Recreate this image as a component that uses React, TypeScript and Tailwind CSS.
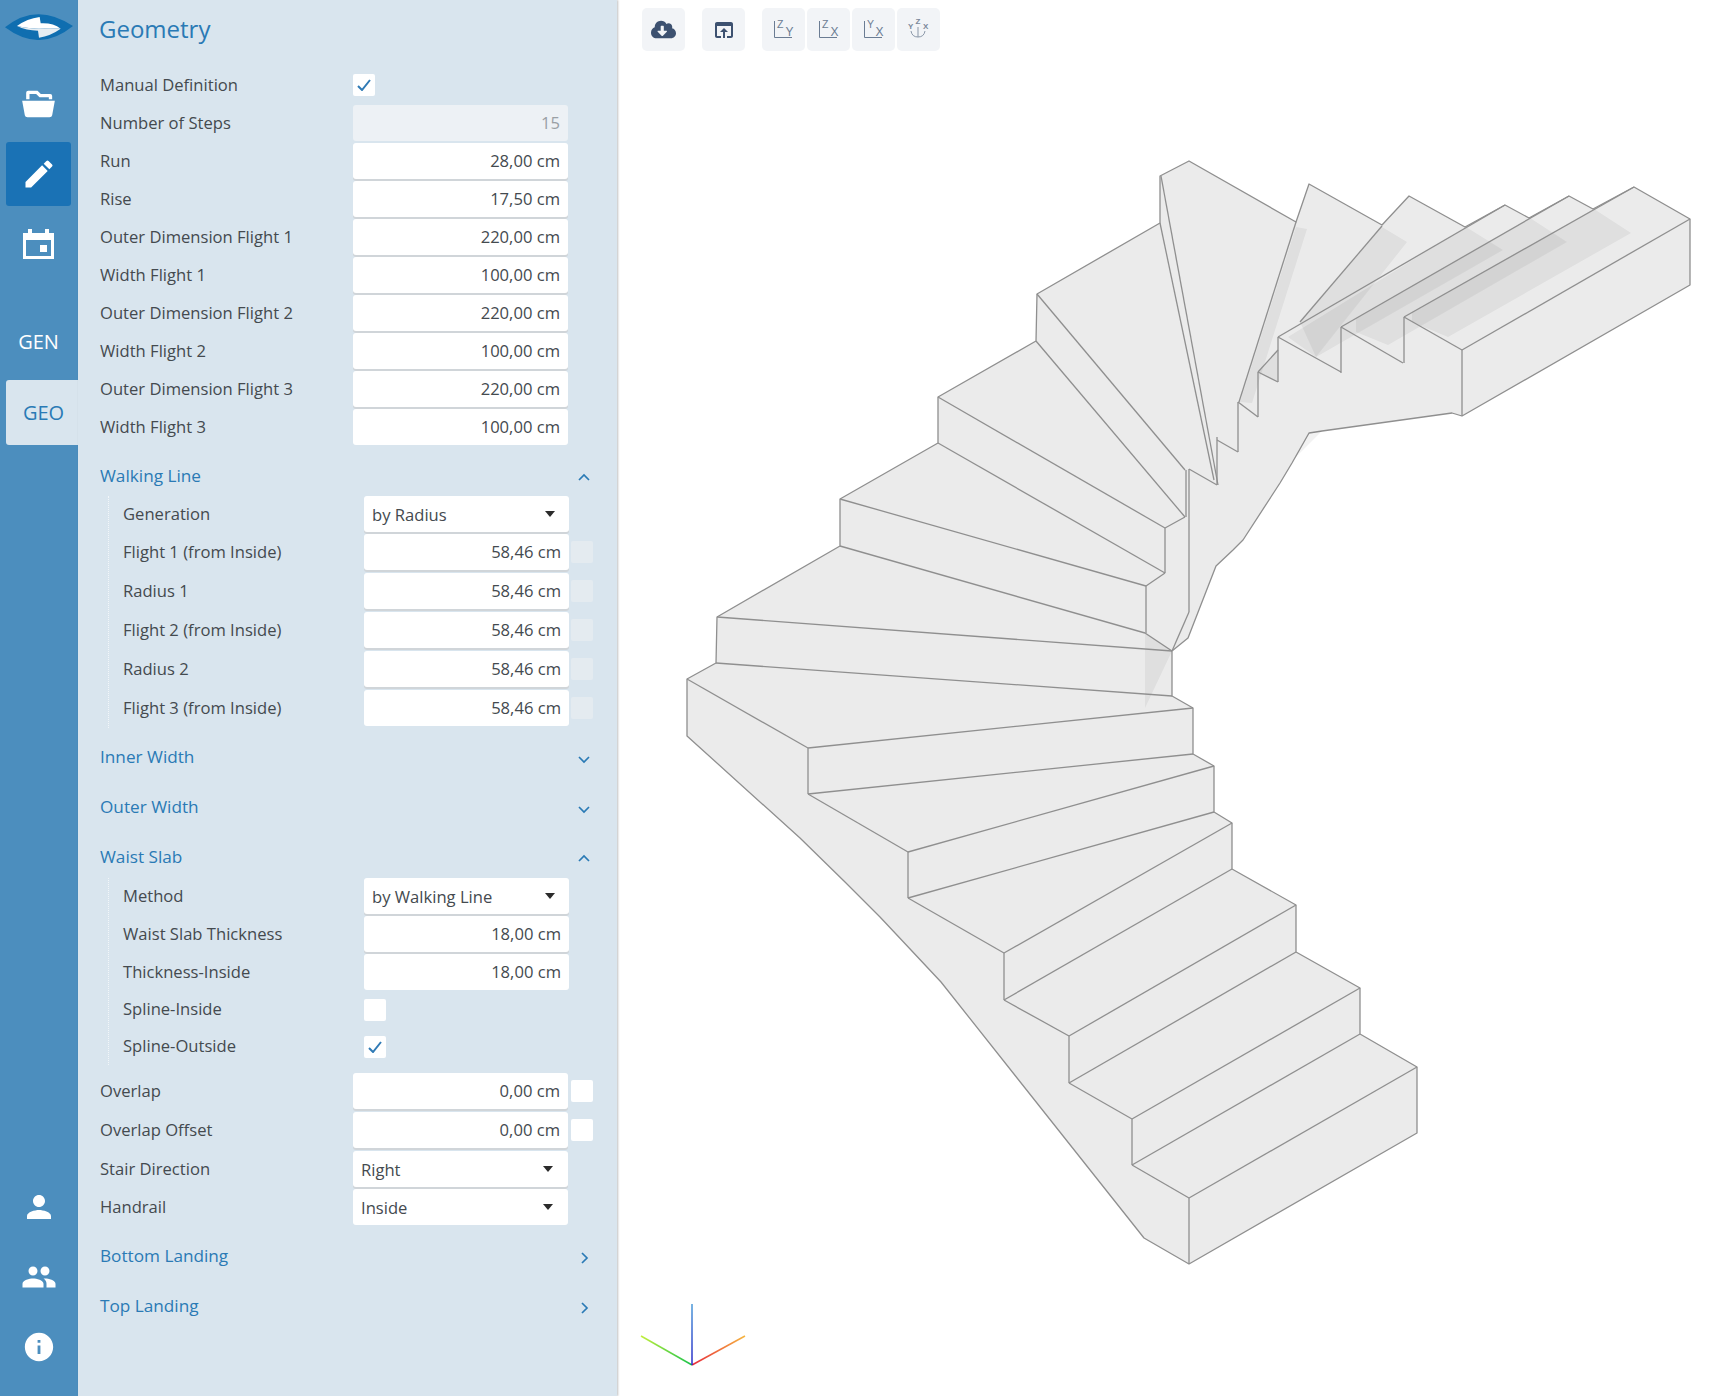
import React from "react";
import { MdEdit, MdPerson, MdPeople, MdInfo } from "react-icons/md";
import { FaCloudDownloadAlt } from "react-icons/fa";

const sil =
  "687,679 716,663 717,617 840,546 840,499 938,443 938,397 1036,341 1037,294 1160,223 1160,176 1189,161 1296,222 1309,184 1382,225 1409,196 1465,227 1505,205 1529,218 1569,196 1593,209 1634,187 1690,219 1690,285 1462,416 1452,413 1322,431 1309,433 1292,463 1280,483 1243,540 1233,550 1216,566 1188,638 1172,651 1172,696 1193,708 1193,754 1214,766 1214,812 1232,823 1232,869 1296,905 1296,952 1360,988 1360,1034 1417,1067 1417,1133 1189,1264 1144,1238 941,982 911,950 880,917 845,882 800,838 687,736";

const shades = [
  "1594,209 1631,233 1448,337 1412,322 1412,312",
  "1530,218 1567,242 1388,345 1356,332 1356,318",
  "1466,227 1503,250 1316,357 1288,337",
  "1382,227 1407,242 1316,357 1300,322",
  "1296,227 1307,229 1252,403 1240,402",
  "1278,350 1258,372 1278,382",
  "1145,633 1172,651 1145,708",
  "1322,431 1309,433 1295,458",
];

const lines: number[][] = [
  [687, 679, 808, 748], [808, 748, 808, 794], [808, 748, 1193, 708], [808, 794, 1193, 754], [808, 794, 908, 852],
  [908, 852, 908, 898], [908, 852, 1214, 766], [908, 898, 1214, 812], [908, 898, 1004, 953], [1004, 953, 1004, 1000],
  [1004, 953, 1232, 823], [1004, 1000, 1232, 869], [1004, 1000, 1069, 1036], [1069, 1036, 1069, 1083], [1069, 1036, 1296, 905],
  [1069, 1083, 1296, 952], [1069, 1083, 1132, 1119], [1132, 1119, 1132, 1165], [1132, 1119, 1360, 988], [1132, 1165, 1360, 1034],
  [1132, 1165, 1189, 1198], [1189, 1198, 1189, 1264], [1189, 1198, 1417, 1067],
  [716, 663, 1172, 696], [717, 617, 1172, 651], [840, 546, 1145, 633], [840, 499, 1146, 586], [1146, 586, 1146, 633],
  [1146, 586, 1165, 573], [938, 443, 1165, 573], [938, 397, 1165, 528], [1165, 528, 1165, 573], [1165, 528, 1185, 517],
  [1036, 341, 1185, 517], [1037, 294, 1185, 470], [1186, 470, 1186, 517], [1189, 469, 1189, 612], [1189, 612, 1172, 651],
  [1189, 469, 1217, 485], [1145, 633, 1172, 651],
  [1161, 176, 1218, 485], [1160, 223, 1214, 480], [1217, 437, 1217, 485], [1217, 440, 1238, 452], [1238, 402, 1238, 452],
  [1296, 222, 1239, 402], [1238, 402, 1258, 417], [1258, 372, 1258, 417], [1258, 372, 1278, 382], [1382, 226, 1300, 322],
  [1278, 350, 1258, 372], [1278, 337, 1278, 382], [1278, 337, 1505, 205], [1278, 337, 1341, 372], [1341, 327, 1341, 373],
  [1341, 327, 1569, 196], [1341, 327, 1403, 363], [1404, 317, 1404, 363], [1404, 317, 1634, 187], [1404, 317, 1462, 350],
  [1462, 350, 1690, 219], [1462, 350, 1462, 416],
];

function Check() {
  return (
    <svg viewBox="0 0 14 12" className="w-[14px] h-[12px]" fill="none" stroke="#2f7ab5" strokeWidth="2">
      <polyline points="1,7 5,11 13,1" />
    </svg>
  );
}

function Box({ on, dim, className }: { on?: boolean; dim?: boolean; className: string }) {
  return (
    <div className={`flex-none w-[22px] h-[22px] rounded-[2px] flex items-center justify-center ${dim ? "bg-[#e4ebf0]" : "bg-white"} ${className}`}>
      {on && <Check />}
    </div>
  );
}

function Caret() {
  return (
    <svg viewBox="0 0 10 6" className="w-[10px] h-[6px]" fill="#2b2b2b">
      <polygon points="0,0 10,0 5,6" />
    </svg>
  );
}

function Chevron({ dir }: { dir: "up" | "down" | "right" }) {
  const pts = dir === "up" ? "1,8 6,3 11,8" : dir === "down" ? "1,4 6,9 11,4" : "4,1 9,6 4,11";
  return (
    <svg viewBox="0 0 12 12" className="w-[12px] h-[12px] mt-[4px]" fill="none" stroke="#2a7ab5" strokeWidth="1.7">
      <polyline points={pts} />
    </svg>
  );
}

const shadow = "shadow-[0_2px_0_0_#d0d5d9]";

function Value({ text, width, last, disabled, pad }: { text: string; width: string; last?: boolean; disabled?: boolean; pad: string }) {
  return (
    <div className={`flex-none h-[36px] rounded-[3px] flex items-center justify-end ${width} ${pad} ${disabled ? "bg-[#edf1f5] text-[#9aa0a5]" : "bg-white text-[#444a4f]"} ${last ? "" : shadow}`}>
      {text}
    </div>
  );
}

function Select({ text, width, last, pad, caretPad }: { text: string; width: string; last?: boolean; pad: string; caretPad: string }) {
  return (
    <div className={`flex-none h-[36px] rounded-[3px] bg-white text-[#444a4f] flex items-center justify-between ${width} ${pad} ${caretPad} ${last ? "" : shadow}`}>
      <span className="pt-[2px]">{text}</span>
      <Caret />
    </div>
  );
}

function Header({ text, dir, className }: { text: string; dir: "up" | "down" | "right"; className: string }) {
  return (
    <div className={`h-[40px] flex-none flex items-center justify-between pr-[27px] text-[#2a7ab5] text-[17.2px] ${className}`}>
      <span>{text}</span>
      <Chevron dir={dir} />
    </div>
  );
}

function MainRow({ label, children, className = "mb-[2px]" }: { label: string; children: React.ReactNode; className?: string }) {
  return (
    <div className={`flex items-center h-[36px] flex-none ${className}`}>
      <div className="w-[253px] flex-none text-[#444a4f]">{label}</div>
      {children}
    </div>
  );
}

function GroupRow({ label, children, className = "mb-[2px] h-[36px]" }: { label: string; children: React.ReactNode; className?: string }) {
  return (
    <div className={`flex items-center ${className}`}>
      <div className="w-[241px] flex-none text-[#444a4f]">{label}</div>
      {children}
    </div>
  );
}

const mainW = "w-[215px]";
const groupW = "w-[205px]";
const mainPad = "pr-[8px]";
const groupPad = "pr-[8px]";

function ToolBtn({ children, className = "" }: { children: React.ReactNode; className?: string }) {
  return (
    <div className={`w-[43px] h-[43px] rounded-[5px] bg-[#f2f4f7] flex items-center justify-center ${className}`}>
      {children}
    </div>
  );
}

function AxisIcon({ a, b }: { a: string; b: string }) {
  return (
    <svg viewBox="0 0 43 43" className="w-[43px] h-[43px]" fill="none" stroke="#6b7c93" strokeWidth="1">
      <polyline points="12.5,13 12.5,29.5 30,29.5" />
      <text x="15" y="19.5" fontSize="10.5" fill="#6b7c93" stroke="none" fontFamily="'Liberation Sans', sans-serif">{a}</text>
      <text x="23.5" y="28" fontSize="12" fill="#6b7c93" stroke="none" fontFamily="'Liberation Sans', sans-serif">{b}</text>
    </svg>
  );
}

function RailItem({ children, active }: { children: React.ReactNode; active?: boolean }) {
  return (
    <div className={`ml-[6px] w-[65px] h-[64px] flex items-center justify-center rounded-[3px] text-white ${active ? "bg-[#1a72b5]" : ""}`}>
      {children}
    </div>
  );
}

export default function App() {
  return (
    <div className="flex h-[1396px] w-[1726px] overflow-hidden bg-white text-[16.6px] font-['Open_Sans',sans-serif]">
      {/* rail */}
      <aside className="w-[78px] flex-none bg-[#4c8ebe] flex flex-col">
        <svg viewBox="16 42 204 78" className="w-[68px] h-[26px] mt-[14px] ml-[5px] flex-none">
          <path d="M16 82 Q110 5 220 78 Q120 160 16 82Z" fill="#0f6eb0" />
          <path d="M52 78 Q82 56 120 51 L123 70 Q160 68 183 86 Q150 84 118 86 Q90 86 52 78Z" fill="#ffffff" />
          <path d="M183 86 Q152 108 118 113 L115 92 Q80 92 52 78 Q90 86 118 86 Q150 84 183 86Z" fill="#e6edf2" />
        </svg>
        <div className="flex flex-col gap-[6px] mt-[32px]">
          <RailItem>
            <svg viewBox="66 272 98 84" className="w-[33px] h-[28px]" fill="#fff">
              <path d="M78 300 V280 Q78 274 84 274 H112 L122 284 H150 Q156 284 156 290 V300 H146 V294 H118 L108 284 H88 V300 Z" />
              <path d="M66 304 H164 L156 348 Q155 354 148 354 H82 Q75 354 74 348 Z" />
            </svg>
          </RailItem>
          <RailItem active>
            <MdEdit className="w-[36px] h-[36px]" />
          </RailItem>
          <RailItem>
            <svg viewBox="0 0 31 30" className="w-[31px] h-[30px]" fill="#fff" fillRule="evenodd">
              <path d="M0 4 H5 V0 H9 V4 H22 V0 H26 V4 H31 V30 H0 Z M3 11 V27 H28 V11 Z M17 16 H24 V23 H17 Z" />
            </svg>
          </RailItem>
        </div>
        <div className="mt-[34px] ml-[6px] w-[65px] h-[64px] flex items-center justify-center text-white text-[20px] font-medium">GEN</div>
        <div className="mt-[6px] ml-[6px] w-[72px] h-[65px] pl-[3px] rounded-l-[3px] bg-[#d9e5ee] flex items-center justify-center text-[#2a7ab5] text-[20px]">GEO</div>
        <div className="mt-auto mb-[17px] flex flex-col gap-[6px]">
          <RailItem><MdPerson className="w-[36px] h-[36px]" /></RailItem>
          <RailItem><MdPeople className="w-[36px] h-[36px]" /></RailItem>
          <RailItem><MdInfo className="w-[34px] h-[34px]" /></RailItem>
        </div>
      </aside>

      {/* panel */}
      <section className="w-[539px] flex-none flex flex-col bg-[#d9e5ee] pl-[22px] shadow-[1px_0_2px_rgba(0,0,0,0.25)] relative z-10">
        <h1 className="h-[67px] flex-none pb-[9px] flex items-center text-[24px] text-[#2a7ab5] -ml-[1px]">Geometry</h1>
        <MainRow label="Manual Definition"><Box on className="" /></MainRow>
        <MainRow label="Number of Steps"><Value text="15" width={mainW} pad={mainPad} disabled last /></MainRow>
        <MainRow label="Run"><Value text="28,00 cm" width={mainW} pad={mainPad} /></MainRow>
        <MainRow label="Rise"><Value text="17,50 cm" width={mainW} pad={mainPad} /></MainRow>
        <MainRow label="Outer Dimension Flight 1"><Value text="220,00 cm" width={mainW} pad={mainPad} /></MainRow>
        <MainRow label="Width Flight 1"><Value text="100,00 cm" width={mainW} pad={mainPad} /></MainRow>
        <MainRow label="Outer Dimension Flight 2"><Value text="220,00 cm" width={mainW} pad={mainPad} /></MainRow>
        <MainRow label="Width Flight 2"><Value text="100,00 cm" width={mainW} pad={mainPad} /></MainRow>
        <MainRow label="Outer Dimension Flight 3"><Value text="220,00 cm" width={mainW} pad={mainPad} /></MainRow>
        <MainRow label="Width Flight 3"><Value text="100,00 cm" width={mainW} pad={mainPad} last /></MainRow>

        <Header text="Walking Line" dir="up" className="mt-[9px]" />
        <div className="ml-[8px] border-l border-dotted border-[#f2f6f9] pl-[14px] pb-[2px]">
          <GroupRow label="Generation"><Select text="by Radius" width={groupW} pad="pl-[8px]" caretPad="pr-[14px]" /></GroupRow>
          {[
            "Flight 1 (from Inside)",
            "Radius 1",
            "Flight 2 (from Inside)",
            "Radius 2",
            "Flight 3 (from Inside)",
          ].map((l, i) => (
            <GroupRow key={l} label={l} className={i === 4 ? "h-[36px]" : "h-[36px] mb-[3px]"}>
              <Value text="58,46 cm" width={groupW} pad={groupPad} last={i === 4} />
              <Box dim className="ml-[2px]" />
            </GroupRow>
          ))}
        </div>

        <Header text="Inner Width" dir="down" className="mt-[9px]" />
        <Header text="Outer Width" dir="down" className="mt-[10px]" />
        <Header text="Waist Slab" dir="up" className="mt-[10px]" />
        <div className="ml-[8px] mt-[1px] border-l border-dotted border-[#f2f6f9] pl-[14px]">
          <GroupRow label="Method"><Select text="by Walking Line" width={groupW} pad="pl-[8px]" caretPad="pr-[14px]" /></GroupRow>
          <GroupRow label="Waist Slab Thickness"><Value text="18,00 cm" width={groupW} pad={groupPad} /></GroupRow>
          <GroupRow label="Thickness-Inside" className="h-[36px] mb-[1px]"><Value text="18,00 cm" width={groupW} pad={groupPad} last /></GroupRow>
          <GroupRow label="Spline-Inside" className="h-[37px]"><Box className="" /></GroupRow>
          <GroupRow label="Spline-Outside" className="h-[37px]"><Box on className="" /></GroupRow>
        </div>

        <MainRow label="Overlap" className="mt-[8px] mb-[3px]">
          <Value text="0,00 cm" width={mainW} pad={mainPad} />
          <Box className="ml-[3px]" />
        </MainRow>
        <MainRow label="Overlap Offset" className="mb-[3px]">
          <Value text="0,00 cm" width={mainW} pad={mainPad} />
          <Box className="ml-[3px]" />
        </MainRow>
        <MainRow label="Stair Direction">
          <Select text="Right" width={mainW} pad="pl-[8px]" caretPad="pr-[15px]" />
        </MainRow>
        <MainRow label="Handrail" className="">
          <Select text="Inside" width={mainW} last pad="pl-[8px]" caretPad="pr-[15px]" />
        </MainRow>
        <Header text="Bottom Landing" dir="right" className="mt-[11px]" />
        <Header text="Top Landing" dir="right" className="mt-[10px]" />
      </section>

      {/* viewport */}
      <main className="relative flex-1">
        <svg viewBox="617 0 1109 1396" className="absolute inset-0 w-full h-full">
          <defs>
            <linearGradient id="ax-g" gradientUnits="userSpaceOnUse" x1="692" y1="1365" x2="641" y2="1336">
              <stop offset="0" stopColor="#18c24a" />
              <stop offset="1" stopColor="#c4ef3c" />
            </linearGradient>
            <linearGradient id="ax-r" gradientUnits="userSpaceOnUse" x1="692" y1="1365" x2="745" y2="1336">
              <stop offset="0" stopColor="#e8283a" />
              <stop offset="1" stopColor="#f6b640" />
            </linearGradient>
            <linearGradient id="ax-b" gradientUnits="userSpaceOnUse" x1="692" y1="1365" x2="692" y2="1304">
              <stop offset="0" stopColor="#2626c8" />
              <stop offset="1" stopColor="#4a9ad8" />
            </linearGradient>
          </defs>
          <polygon points={sil} fill="#ebebeb" stroke="#8f8f8f" strokeWidth="1.3" strokeLinejoin="round" />
          {shades.map((s) => (
            <polygon key={s} points={s} fill="#000" fillOpacity="0.05" />
          ))}
          {lines.map((l, i) => (
            <line key={i} x1={l[0]} y1={l[1]} x2={l[2]} y2={l[3]} stroke="#8f8f8f" strokeWidth="1.3" />
          ))}
          <line x1="692" y1="1365" x2="641" y2="1336" stroke="url(#ax-g)" strokeWidth="1.5" />
          <line x1="692" y1="1365" x2="745" y2="1336" stroke="url(#ax-r)" strokeWidth="1.5" />
          <line x1="692" y1="1365" x2="692" y2="1304" stroke="url(#ax-b)" strokeWidth="1.5" />
        </svg>

        <div className="relative flex pt-[8px] pl-[25px]">
          <ToolBtn className="text-[#3d5170]"><FaCloudDownloadAlt className="w-[25px] h-[25px]" /></ToolBtn>
          <ToolBtn className="ml-[17px]">
            <svg viewBox="0 0 24 24" className="w-[24px] h-[24px]" fill="#3d5170">
              <path d="M19 4H5c-1.11 0-2 .9-2 2v12c0 1.1.89 2 2 2h4v-2H5V8h14v10h-4v2h4c1.1 0 2-.9 2-2V6c0-1.1-.89-2-2-2zm-7 6l-4 4h3v6h2v-6h3l-4-4z" />
            </svg>
          </ToolBtn>
          <ToolBtn className="ml-[17px]"><AxisIcon a="Z" b="Y" /></ToolBtn>
          <ToolBtn className="ml-[2px]"><AxisIcon a="Z" b="X" /></ToolBtn>
          <ToolBtn className="ml-[2px]"><AxisIcon a="Y" b="X" /></ToolBtn>
          <ToolBtn className="ml-[2px]">
            <svg viewBox="0 0 43 43" className="w-[43px] h-[43px]" fill="none" stroke="#8a97a8" strokeWidth="1">
              <path d="M21 29 V19 M14 23 Q15 29 21 29 Q27 29 28 23" />
              <text x="11" y="21" fontSize="8" fontWeight="700" fill="#7a889a" stroke="none" fontFamily="'Liberation Sans', sans-serif">Y</text>
              <text x="18.5" y="16" fontSize="8" fontWeight="700" fill="#7a889a" stroke="none" fontFamily="'Liberation Sans', sans-serif">Z</text>
              <text x="26" y="21" fontSize="8" fontWeight="700" fill="#7a889a" stroke="none" fontFamily="'Liberation Sans', sans-serif">X</text>
            </svg>
          </ToolBtn>
        </div>
      </main>
    </div>
  );
}
